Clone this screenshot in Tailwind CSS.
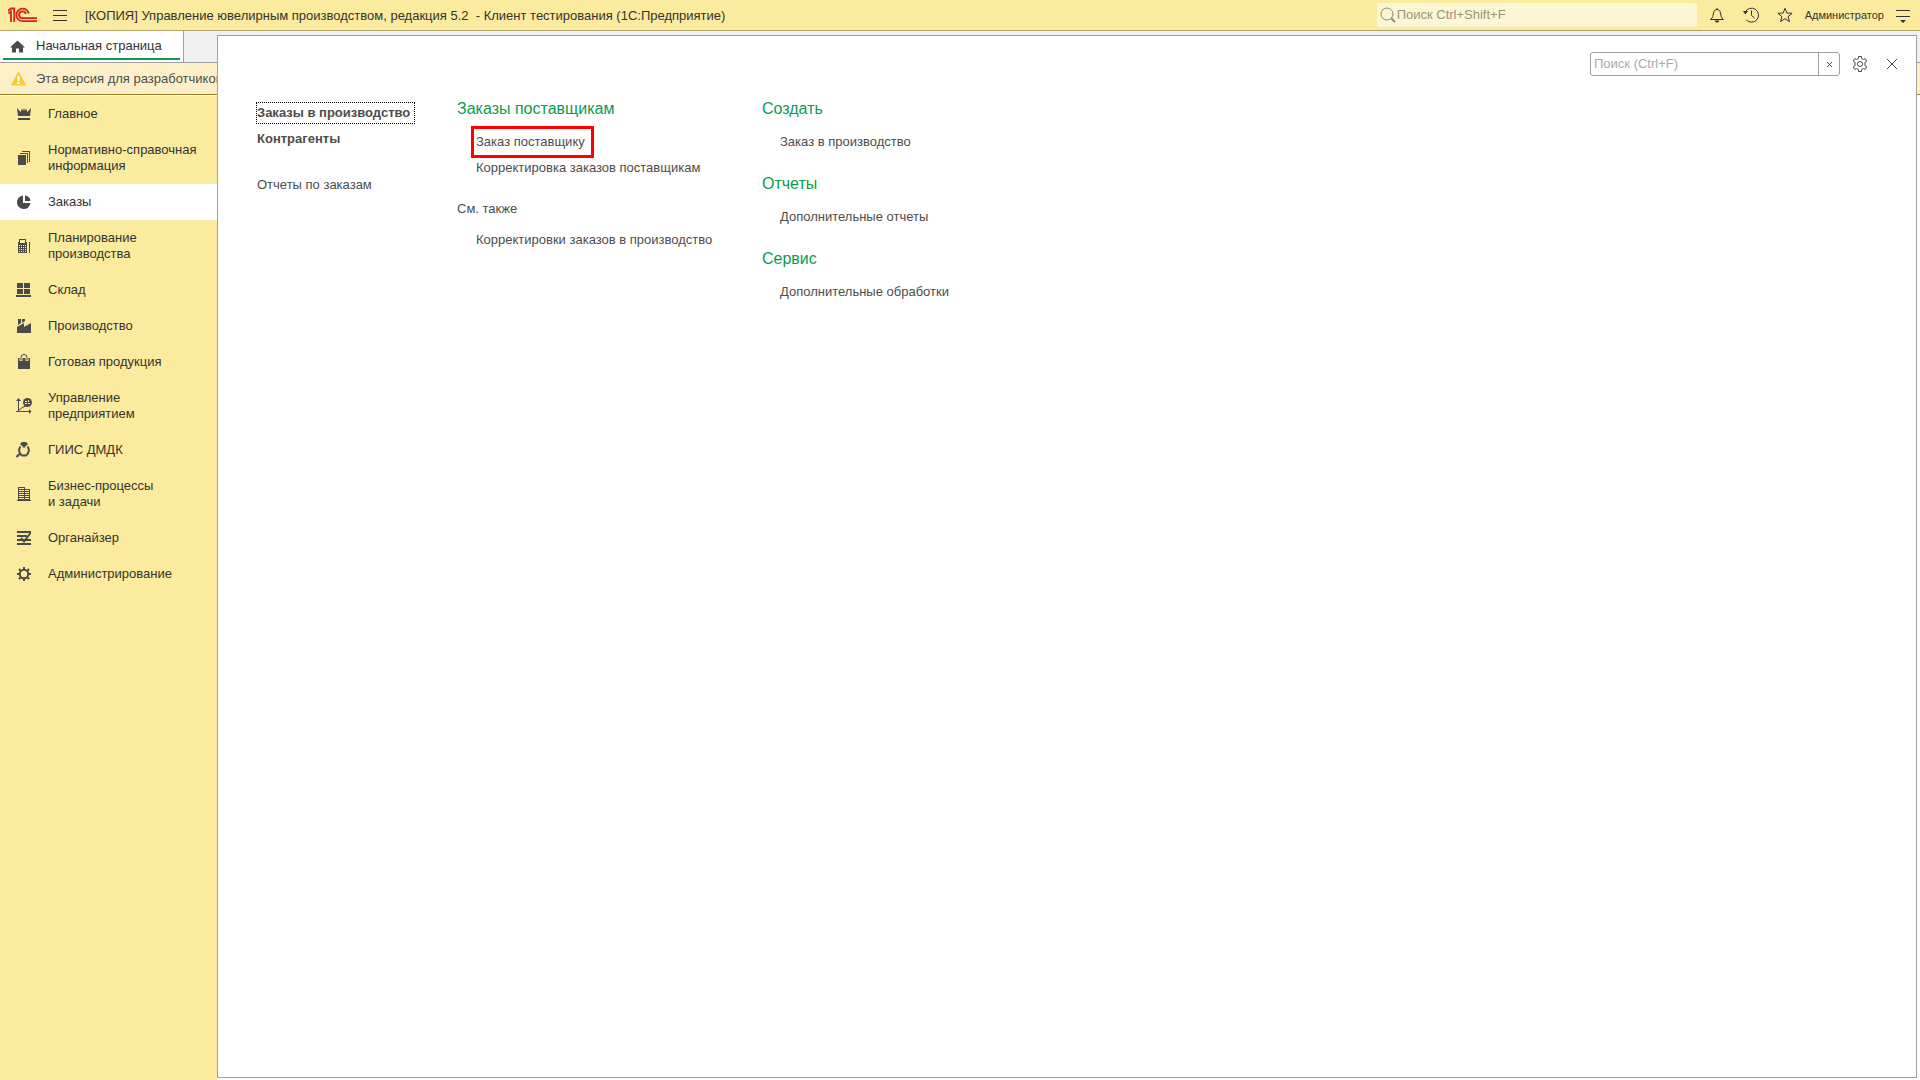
<!DOCTYPE html>
<html lang="ru">
<head>
<meta charset="utf-8">
<title>Управление ювелирным производством</title>
<script src="https://cdn.jsdelivr.net/npm/@tailwindcss/browser@4"></script>
</head>
<body class="relative flex h-screen flex-col overflow-hidden bg-white font-['Liberation_Sans',Arial,sans-serif] text-[13px] leading-4 text-[#333333]">

<header class="flex h-[31px] shrink-0 items-center border-b border-[#aea66e] bg-[#faeb9e] pl-2 pr-[10px]">
  <svg class="h-4 w-[30px]" viewBox="0 0 30 16" fill="none" stroke="#d8201f" stroke-width="1.800" aria-label="1С">
    <path d="M0 4 3 1.500H6.200V15M0.500 6.500 3 4.500V15"/>
    <path d="M20.800 6.500A6.300 6.300 0 1 0 14.800 14.200H29"/>
    <path d="M17.800 7A3.400 3.400 0 1 0 14.800 11.200H29"/>
  </svg>
  <button class="ml-[15px] flex h-6 w-[14px] items-center" aria-label="Меню">
    <svg class="h-3 w-[14px]" viewBox="0 0 14 12" fill="#333"><path d="M0 1h14v1H0zM0 6h14v1H0zM0 11h14v1H0z"/></svg>
  </button>
  <h1 class="ml-[18px] whitespace-pre pt-px">[КОПИЯ] Управление ювелирным производством, редакция 5.2  - Клиент тестирования (1С:Предприятие)</h1>
  <label class="ml-auto flex h-6 w-[320px] items-center rounded-xs bg-[#fdf6d4] pl-[3px]">
    <svg class="size-4" viewBox="0 0 16 16" fill="none" stroke="#8d8870"><circle cx="7" cy="7" r="6"/><path d="m11 11 4 4" stroke-width="2"/></svg>
    <input type="text" aria-label="Поиск" placeholder="Поиск Ctrl+Shift+F" class="ml-px min-w-0 flex-1 bg-transparent outline-none placeholder:text-[#99947d]">
  </label>
  <button class="ml-3" aria-label="Уведомления">
    <svg class="size-4" viewBox="0 0 16 16" fill="none" stroke="#333"><path d="M1.500 12.500C4 10.500 4 9 4.500 6 5 3.500 6.500 2.500 8 2.500S11 3.500 11.500 6C12 9 12 10.500 14.500 12.500Z"/><path d="M8 1v1.500"/><path d="M5.500 13.500h5L9 15.500H7z" fill="#333" stroke="none"/></svg>
  </button>
  <button class="ml-[18px]" aria-label="История">
    <svg class="size-4" viewBox="0 0 16 16" fill="none" stroke="#333"><path d="M2.300 5A7 7 0 1 1 3.500 13M8.500 3.500v5l3 2.500"/><path d="M0 4h5L2.300 7.500z" fill="#333" stroke="none"/></svg>
  </button>
  <button class="ml-[18px]" aria-label="Избранное">
    <svg class="size-4" viewBox="0 0 16 16" fill="none" stroke="#333"><path d="m8 1.300 1.900 4.800 5.200.2-4 3.300 1.400 5L8 11.700l-4.500 2.900 1.400-5-4-3.300 5.200-.2z"/></svg>
  </button>
  <a href="#" class="ml-3 text-[11px]">Администратор</a>
  <button class="ml-3" aria-label="Настройки окна">
    <svg class="h-4 w-[14px]" viewBox="0 0 14 16" fill="#333"><path d="M0 3h14v1H0zM0 9h14v1H0zM4 13h6l-3 3z"/></svg>
  </button>
</header>

<nav class="flex h-8 shrink-0 border-b border-[#a0a0a0] bg-[#f0f0f0]">
  <a href="#" class="flex w-[184px] border-r border-[#a0a0a0] bg-white px-[3px] pb-0.5">
    <span class="flex flex-1 items-center border-b-2 border-[#0d9a50] pl-[7px] pt-[3px]">
      <svg class="size-[15px]" viewBox="0 0 15 14" fill="#4a4a4a"><path d="M7.500 1 15 8h-2v5H9V9H6v4H2V8H0z"/></svg>
      <span class="ml-[11px]">Начальная страница</span>
    </span>
  </a>
</nav>

<p class="flex h-8 shrink-0 items-center border-b border-[#9a7d1e] bg-[#fdf0c8] pl-[11px] text-[#4d4d4d]">
  <svg class="size-[15px]" viewBox="0 0 15 15"><path d="M7.500 1 14.500 14H.5z" fill="#f8cb2e" stroke="#f8cb2e"/><path d="M6.500 5h2v5h-2zM6.500 11h2v2h-2z" fill="#fff"/></svg>
  <span class="ml-[10px] whitespace-nowrap">Эта версия для разработчиков</span>
</p>

<div class="mt-px flex min-h-0 flex-1">
  <aside class="w-[217px] bg-[#faeb9e]">
    <ul class="[&_a]:flex [&_a]:items-center [&_a]:gap-4 [&_a]:py-[10px] [&_a]:pl-4 [&_svg]:size-4 [&_svg]:shrink-0 [&_svg]:fill-[#4a4a4a]">
      <li><a href="#"><svg viewBox="0 0 16 16"><path d="M1 2 4.500 6 6 2.500 7 5 8 2l1 3 1-2.500L11.500 6 15 2 14 10H2zM2 12h12v2H2z"/></svg>Главное</a></li>
      <li><a href="#"><svg viewBox="0 0 16 16"><path d="M2 5h8v10H2zM4 3h8v10h-1V4H4zM6 1h8v11h-1V2H6z"/></svg>Нормативно-справочная<br>информация</a></li>
      <li><a href="#" class="bg-white" aria-current="page"><svg viewBox="0 0 16 16"><path d="M7 1.500V9h7.500A6.800 6.800 0 1 1 7 1.500zM9 1.500A6.500 6.500 0 0 1 14.500 7H9z"/></svg>Заказы</a></li>
      <li><a href="#"><svg viewBox="0 0 16 16"><path fill-rule="evenodd" d="M3 1h7v3h1v11H2V4h1zM4 2v3h5V2zM3 7v1h1V7zM5 7v1h1V7zM7 7v1h1V7zM9 7v1h1V7zM3 9v1h1V9zM5 9v1h1V9zM7 9v1h1V9zM9 9v1h1V9zM3 11v1h1v-1zM5 11v1h1v-1zM7 11v1h1v-1zM9 11v1h1v-1zM3 13v1h1v-1zM5 13v1h1v-1zM7 13v1h1v-1zM9 13v1h1v-1zM13 4h1v11h-1z"/></svg>Планирование<br>производства</a></li>
      <li><a href="#"><svg viewBox="0 0 16 16"><path d="M1 1h6v5H1zM8 1h6v5H8zM1 7h6v5H1zM8 7h6v5H8zM0 13h15v2H0z"/></svg>Склад</a></li>
      <li><a href="#"><svg viewBox="0 0 16 16"><path d="M2 1h3v4L2 7zM6 1h3v2L6 5zM1 9l7-4v4l7-4v10H1z"/></svg>Производство</a></li>
      <li><a href="#"><svg viewBox="0 0 16 16"><path d="M2 4h12v11H2z"/><path d="M5 7V4a3 3 0 0 1 6 0v3" style="fill:none" stroke="#faeb9e" stroke-width="3"/><path d="M5 6.500V3.500a3 3 0 0 1 6 0v3" style="fill:none" stroke="#4a4a4a"/></svg>Готовая продукция</a></li>
      <li><a href="#"><svg viewBox="0 0 16 16"><path d="M2 2h1v11h10v1H0v-1h2zM0 3l2.500-3L5 3zM13 11l2.500 2.500L13 16z"/><path d="m3 12 4-3 3-1" fill="none" stroke="#4a4a4a"/><circle cx="11.500" cy="4.500" r="4.500"/><path d="M9 3h2v1H9zM12 2h1v2h-1zM9 5h2v1H9zM12 5h2v1h-2z" fill="#faeb9e" style="fill:#faeb9e"/></svg>Управление<br>предприятием</a></li>
      <li><a href="#"><svg viewBox="0 0 16 16"><path d="M6 0h4l2 2-4 4-4-4z"/><path d="M4.500 4.500C2.500 7 2.500 11 6 13.500h4C13.500 11 13.500 7 11.500 4.500M4.500 11 .5 15" style="fill:none" stroke="#4a4a4a" stroke-width="2"/></svg>ГИИС ДМДК</a></li>
      <li><a href="#"><svg viewBox="0 0 16 16"><path fill-rule="evenodd" d="M2 1h7v2h5v11h1v1H1v-1h1zM3 2v1h5V2zM3 4v1h5V4zM3 6v1h5V6zM3 8v1h5V8zM3 10v1h5v-1zM3 12v1h5v-1zM9 4v1h4V4zM9 6v1h4V6zM9 8v1h4V8zM9 10v1h4v-1zM9 12v1h4v-1z"/></svg>Бизнес-процессы<br>и задачи</a></li>
      <li><a href="#"><svg viewBox="0 0 16 16"><path d="M1 1h14v2H1zM1 5h10v2H1zM1 9h14v2H1zM1 13h14v2H1z"/><path d="m5 8 3 3.500L14.500 3" style="fill:none" stroke="#4a4a4a" stroke-width="2"/></svg>Органайзер</a></li>
      <li><a href="#"><svg viewBox="0 0 16 16"><circle cx="8" cy="8" r="4.200" style="fill:none" stroke="#4a4a4a" stroke-width="2"/><path d="M8 1v3M8 12v3M1 8h3M12 8h3M3 3l2 2M11 11l2 2M13 3l-2 2M5 11l-2 2" stroke="#4a4a4a" stroke-width="2"/></svg>Администрирование</a></li>
    </ul>
  </aside>
</div>

<!-- Section menu, opened over the workspace -->
<main class="absolute bottom-[2px] left-[217px] right-[3px] top-[35px] border border-[#a0a0a0] bg-white text-[#4d4d4d]">
  <div class="flex h-[65px] items-center justify-end pb-[9px] pr-[19px]">
    <div class="flex h-6 w-[250px] overflow-hidden rounded-[3px] border border-[#a0a0a0]">
      <input type="text" aria-label="Поиск по разделу" placeholder="Поиск (Ctrl+F)" class="min-w-0 flex-1 pl-[3px] outline-none placeholder:text-[#aaaaaa]">
      <button class="flex w-[21px] items-center justify-center border-l border-[#a0a0a0]" aria-label="Очистить"><svg class="size-[5px]" viewBox="0 0 5 5" stroke="#4a4a4a"><path d="m0 0 5 5M5 0 0 5"/></svg></button>
    </div>
    <button class="ml-3" aria-label="Настройки">
      <svg class="size-4" viewBox="0 0 16 16" fill="none" stroke="#4a4a4a"><circle cx="8" cy="8" r="2.500"/><path d="M6.500.5h3v2l1.800 1 1.900-1 1.500 2.600L13 6.200v3.600l1.700 1.100-1.500 2.600-1.900-1-1.800 1v2h-3v-2l-1.800-1-1.900 1-1.500-2.600L3 9.800V6.200L1.300 5.100l1.500-2.600 1.900 1 1.800-1z"/></svg>
    </button>
    <button class="ml-[19px]" aria-label="Закрыть"><svg class="size-[10px]" viewBox="0 0 10 10" stroke="#4a4a4a"><path d="m0 0 10 10M10 0 0 10"/></svg></button>
  </div>

  <div class="flex items-start pl-[38px]">
    <ul class="flex w-[201px] flex-col items-start gap-1 pt-px font-bold">
      <li><a href="#" class="block whitespace-nowrap border border-dotted border-black py-[2px] pr-1">Заказы в производство</a></li>
      <li><a href="#" class="block px-px py-[3px]">Контрагенты</a></li>
      <li class="pt-5 font-normal"><a href="#" class="block px-px py-[3px]">Отчеты по заказам</a></li>
    </ul>

    <section class="w-[305px]">
      <h2 class="text-base leading-4 text-[#0d9a50]">Заказы поставщикам</h2>
      <ul class="flex flex-col items-start pt-[9px]">
        <li class="pl-[14px]"><a href="#" class="block border-3 border-[#ff0000] py-[5px] pl-[2px] pr-[6px]">Заказ поставщику</a></li>
        <li class="pl-[19px]"><a href="#" class="block py-[2px]">Корректировка заказов поставщикам</a></li>
      </ul>
      <h3 class="pt-[23px]">См. также</h3>
      <ul class="pl-[19px] pt-[15px]"><li><a href="#">Корректировки заказов в производство</a></li></ul>
    </section>

    <div class="flex flex-col gap-[26px]">
      <section>
        <h2 class="text-base leading-4 text-[#0d9a50]">Создать</h2>
        <a href="#" class="mt-[17px] block pl-[18px]">Заказ в производство</a>
      </section>
      <section>
        <h2 class="text-base leading-4 text-[#0d9a50]">Отчеты</h2>
        <a href="#" class="mt-[17px] block pl-[18px]">Дополнительные отчеты</a>
      </section>
      <section>
        <h2 class="text-base leading-4 text-[#0d9a50]">Сервис</h2>
        <a href="#" class="mt-[17px] block pl-[18px]">Дополнительные обработки</a>
      </section>
    </div>
  </div>
</main>
</body>
</html>
